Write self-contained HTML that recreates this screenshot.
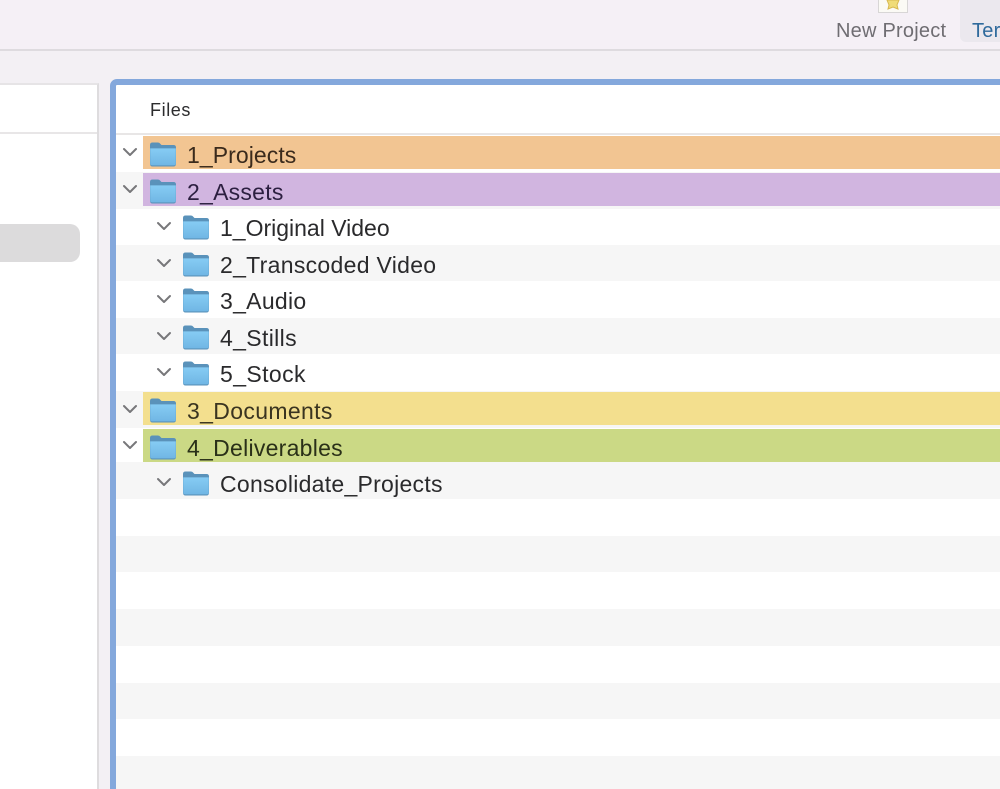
<!DOCTYPE html>
<html><head><meta charset="utf-8"><style>
html,body{margin:0;padding:0;width:1000px;height:789px;overflow:hidden}
body{position:relative;background:#f3f0f4;font-family:"Liberation Sans",sans-serif}
#w{position:absolute;left:0;top:0;width:1000px;height:789px;overflow:hidden;filter:blur(.35px)}
.a{position:absolute}
.t{position:absolute;margin-top:-1px;font-size:23px;line-height:30px;letter-spacing:.27px;color:#2a2a2c;white-space:nowrap}
svg.c{position:absolute;width:16px;height:10px}
svg.f{position:absolute;width:28px;height:26px}
</style></head><body><div id="w">
<svg width="0" height="0" style="position:absolute"><defs>
<linearGradient id="g" x1="0" y1="0" x2="0" y2="1"><stop offset="0" stop-color="#86ccf4"/><stop offset="1" stop-color="#70b6e4"/></linearGradient>
<symbol id="fo" viewBox="0 0 28 26"><path d="M1 4Q1 1.5 3.5 1.5H9Q10.5 1.5 11.5 3L12.5 4H24.5Q27 4 27 6.5V22.5Q27 25.5 24.5 25.5H3.5Q1 25.5 1 22.5Z" fill="#5a92ba"/><path d="M1.2 7.4H26.8V22.6Q26.8 24.4 24.6 24.4H3.4Q1.2 24.4 1.2 22.6Z" fill="url(#g)"/></symbol>
<symbol id="ch" viewBox="0 0 16 10"><path d="M2 2L8 8L14 2" fill="none" stroke="#77777a" stroke-width="2" stroke-linecap="round" stroke-linejoin="round"/></symbol>
</defs></svg>

<!-- top bar -->
<div class="a" style="left:0;top:0;width:1000px;height:49px;background:#f5f0f6"></div>
<div class="a" style="left:0;top:49px;width:1000px;height:2px;background:#dedbdf"></div>
<div class="a" style="left:960px;top:0;width:40px;height:42px;background:#ebe8ee;border-radius:0 0 0 6px"></div>
<div class="a" style="left:878px;top:-4px;width:30px;height:17px;background:#fbfaf5;border:1px solid #d8d6d6;box-sizing:border-box"></div>
<svg class="a" style="left:885px;top:0" width="16" height="10" viewBox="0 0 16 10"><path d="M2 0H14L12 5L13 9L8 7L3 9L4 5Z" fill="#f0dc78" stroke="#d8b850" stroke-width="1"/></svg>
<div class="a" style="left:836px;top:18px;font-size:20px;line-height:26px;letter-spacing:.22px;color:#6f6d72;white-space:nowrap">New Project</div>
<div class="a" style="left:972px;top:18px;font-size:20px;line-height:26px;letter-spacing:.22px;color:#2f6a9c;white-space:nowrap">Ter</div>

<!-- left panel -->
<div class="a" style="left:0;top:83px;width:99px;height:706px;background:#fff;border-top:2px solid #e6e4e6;border-right:2px solid #dedcde;box-sizing:border-box"></div>
<div class="a" style="left:0;top:132px;width:97px;height:2px;background:#e8e6e7"></div>
<div class="a" style="left:0;top:224px;width:80px;height:38px;background:#dcdbdc;border-radius:0 10px 10px 0"></div>

<!-- right panel -->
<div class="a" style="left:110px;top:79px;width:900px;height:730px;background:#fff;border:6px solid #84a8dc;border-radius:7px;box-sizing:border-box"></div>
<div class="a" style="left:150px;top:97px;font-size:18px;line-height:26px;letter-spacing:.6px;color:#2c2c2e">Files</div>
<div class="a" style="left:116px;top:133px;width:884px;height:2px;background:#e8e6e6"></div>

<!-- stripes -->
<div class="a" style="left:116px;top:172px;width:884px;height:37px;background:#f6f6f6"></div>
<div class="a" style="left:116px;top:245px;width:884px;height:36px;background:#f6f6f6"></div>
<div class="a" style="left:116px;top:318px;width:884px;height:36px;background:#f6f6f6"></div>
<div class="a" style="left:116px;top:391px;width:884px;height:37px;background:#f6f6f6"></div>
<div class="a" style="left:116px;top:462px;width:884px;height:37px;background:#f6f6f6"></div>
<div class="a" style="left:116px;top:536px;width:884px;height:36px;background:#f6f6f6"></div>
<div class="a" style="left:116px;top:609px;width:884px;height:37px;background:#f6f6f6"></div>
<div class="a" style="left:116px;top:683px;width:884px;height:36px;background:#f6f6f6"></div>
<div class="a" style="left:116px;top:756px;width:884px;height:33px;background:#f6f6f6"></div>

<!-- colored rows -->
<div class="a" style="left:143px;top:136px;width:857px;height:33px;background:#f2c592"></div>
<div class="a" style="left:143px;top:173px;width:857px;height:33px;background:#d1b5e0"></div>
<div class="a" style="left:143px;top:392px;width:857px;height:33px;background:#f3df8e"></div>
<div class="a" style="left:143px;top:429px;width:857px;height:33px;background:#cbd985"></div>

<!-- rows -->
<svg class="c" style="left:122px;top:147px"><use href="#ch"/></svg><svg class="f" style="left:149px;top:141px"><use href="#fo"/></svg><div class="t" style="left:187px;top:141px;color:#3a2a1c;letter-spacing:.07px">1_Projects</div>
<svg class="c" style="left:122px;top:184px"><use href="#ch"/></svg><svg class="f" style="left:149px;top:178px"><use href="#fo"/></svg><div class="t" style="left:187px;top:178px;color:#2c1f40;letter-spacing:.25px">2_Assets</div>
<svg class="c" style="left:156px;top:221px"><use href="#ch"/></svg><svg class="f" style="left:182px;top:214px"><use href="#fo"/></svg><div class="t" style="left:220px;top:214px;letter-spacing:0">1_Original Video</div>
<svg class="c" style="left:156px;top:258px"><use href="#ch"/></svg><svg class="f" style="left:182px;top:251px"><use href="#fo"/></svg><div class="t" style="left:220px;top:251px;letter-spacing:.3px">2_Transcoded Video</div>
<svg class="c" style="left:156px;top:294px"><use href="#ch"/></svg><svg class="f" style="left:182px;top:287px"><use href="#fo"/></svg><div class="t" style="left:220px;top:287px;letter-spacing:.3px">3_Audio</div>
<svg class="c" style="left:156px;top:331px"><use href="#ch"/></svg><svg class="f" style="left:182px;top:324px"><use href="#fo"/></svg><div class="t" style="left:220px;top:324px;letter-spacing:.35px">4_Stills</div>
<svg class="c" style="left:156px;top:367px"><use href="#ch"/></svg><svg class="f" style="left:182px;top:360px"><use href="#fo"/></svg><div class="t" style="left:220px;top:360px;letter-spacing:.4px">5_Stock</div>
<svg class="c" style="left:122px;top:404px"><use href="#ch"/></svg><svg class="f" style="left:149px;top:397px"><use href="#fo"/></svg><div class="t" style="left:187px;top:397px;color:#3a3420;letter-spacing:.35px">3_Documents</div>
<svg class="c" style="left:122px;top:440px"><use href="#ch"/></svg><svg class="f" style="left:149px;top:434px"><use href="#fo"/></svg><div class="t" style="left:187px;top:434px;color:#2a3018">4_Deliverables</div>
<svg class="c" style="left:156px;top:477px"><use href="#ch"/></svg><svg class="f" style="left:182px;top:470px"><use href="#fo"/></svg><div class="t" style="left:220px;top:470px">Consolidate_Projects</div>
</div></body></html>
